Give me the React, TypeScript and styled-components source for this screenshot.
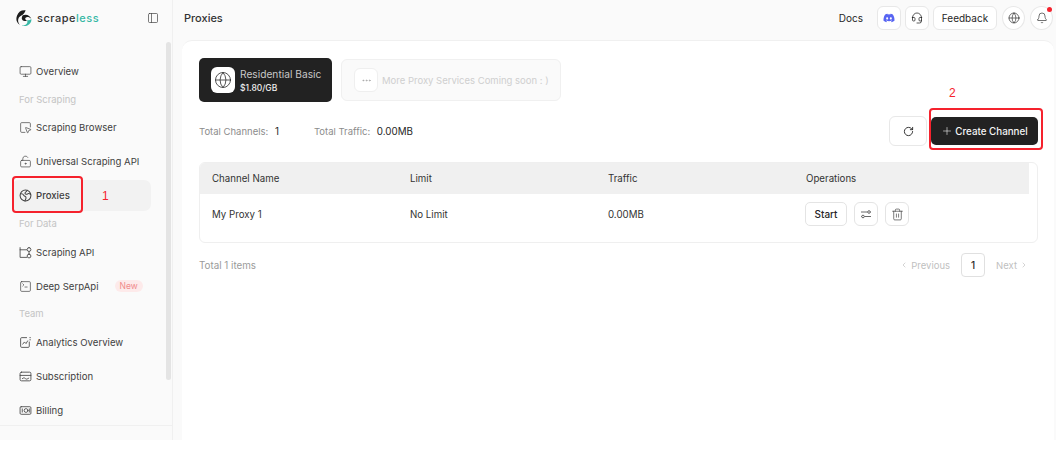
import styled, { createGlobalStyle } from "styled-components";
import {
  Bell,
  ChevronLeft,
  ChevronRight,
  Ellipsis,
  Globe,
  Headset,
  LockKeyholeOpen,
  Monitor,
  PanelLeft,
  Plus,
  RotateCw,
  SquareMousePointer,
  SquareTerminal,
  Trash2,
} from "lucide-react";
import { FaDiscord } from "react-icons/fa";

const GlobalStyle = createGlobalStyle`
  html, body {
    margin: 0;
    padding: 0;
    background: #fff;
    font-family: Inter, "Liberation Sans", sans-serif;
    color: #262626;
    overflow: hidden;
  }
  * { box-sizing: border-box; }
`;

type IconProps = { size?: number; strokeWidth?: number; color?: string };

function svgProps({ size = 13, strokeWidth = 1.3, color = "#444" }: IconProps) {
  return {
    width: size,
    height: size,
    viewBox: "0 0 24 24",
    fill: "none",
    stroke: color,
    strokeWidth: strokeWidth * 1.2,
    strokeLinecap: "round" as const,
    strokeLinejoin: "round" as const,
  };
}

function ProxyIcon(props: IconProps) {
  return (
    <svg {...svgProps(props)} strokeWidth={1.9}>
      <circle cx="12" cy="12" r="10" />
      <path d="M3 9c4-1 5 1 6 3s4 1 4 4-2 4-2 6" />
      <path d="M15 2.500c-1 3-4 3-4 5.500s4 2 5 1 3-1 5.500 1" />
    </svg>
  );
}

function ApiIcon(props: IconProps) {
  return (
    <svg {...svgProps(props)}>
      <path d="M2 3v18h12M2 7h12" />
      <rect x="15" y="3" width="7" height="7" rx="3.500" />
      <rect x="15" y="15" width="7" height="7" rx="3.500" />
      <path d="M18.500 10v5" />
    </svg>
  );
}

function AnalyticsIcon(props: IconProps) {
  return (
    <svg {...svgProps(props)}>
      <path d="M14 3H5a2 2 0 0 0-2 2v14a2 2 0 0 0 2 2h12a2 2 0 0 0 2-2v-8" />
      <path d="M7 15l3-4 3 3 3-5" />
      <path d="M20 3h1M20 7h1" />
    </svg>
  );
}

function SubscriptionIcon(props: IconProps) {
  return (
    <svg {...svgProps(props)}>
      <rect x="2" y="4" width="20" height="16" rx="2.500" />
      <path d="M2 10h20" />
      <path d="M6 16c2-2 4-2 6 0s4 0 6-1" />
    </svg>
  );
}

function BillingIcon(props: IconProps) {
  return (
    <svg {...svgProps(props)}>
      <rect x="2" y="5" width="20" height="14" rx="2" />
      <circle cx="13" cy="12" r="3.500" />
      <path d="M6 9v6M19 9v6" />
    </svg>
  );
}

const groups = [
  { items: [{ label: "Overview", Icon: Monitor }] },
  {
    title: "For Scraping",
    items: [
      { label: "Scraping Browser", Icon: SquareMousePointer },
      { label: "Universal Scraping API", Icon: LockKeyholeOpen },
      { label: "Proxies", Icon: ProxyIcon, active: true },
    ],
  },
  {
    title: "For Data",
    items: [
      { label: "Scraping API", Icon: ApiIcon },
      { label: "Deep SerpApi", Icon: SquareTerminal, badge: "New" },
    ],
  },
  {
    title: "Team",
    items: [
      { label: "Analytics Overview", Icon: AnalyticsIcon },
      { label: "Subscription", Icon: SubscriptionIcon },
      { label: "Billing", Icon: BillingIcon },
    ],
  },
];

function Logo() {
  return (
    <svg width="17" height="18" viewBox="0 0 24 24" fill="none">
      <path d="M15 1.200A11.500 11.500 0 0 0 7 22C3 17.500 3.500 11 9 8.500C11.500 7.300 14 5 15 1.200Z" fill="#1c1c1c" />
      <path d="M11 8C16 6 21.500 8 23 13.500C20.500 10.500 17 10 15 11.500C13.500 13 15 15 17 15C14 17.500 9.500 16 9.500 12.500C9.500 11 10 9.200 11 8Z" fill="#1c1c1c" />
      <path d="M23 13.500C24 19.500 17 25 9.500 22.800C14.500 22.800 19 20 17 15C19.500 15.500 21.500 15 23 13.500Z" fill="#37b8a5" />
    </svg>
  );
}

export default function App() {
  return (
    <>
      <GlobalStyle />
      <Page>
        <Sidebar>
          <Brand>
            <BrandName>
              <Logo />
              <BrandText>
                scrape<BrandAccent>less</BrandAccent>
              </BrandText>
            </BrandName>
            <PanelLeft size={12} strokeWidth={1.4} color="#444" />
          </Brand>
          <Nav>
            {groups.map((group, i) => (
              <div key={i}>
                {group.title && <GroupTitle>{group.title}</GroupTitle>}
                {group.items.map(({ label, Icon, active, badge }: any) => (
                  <NavSlot key={label}>
                    <NavItem $active={active}>
                      <Icon size={13} strokeWidth={1.3} color="#444" />
                      <span>{label}</span>
                      {badge && <Badge>{badge}</Badge>}
                    </NavItem>
                  </NavSlot>
                ))}
              </div>
            ))}
          </Nav>
          <SidebarFoot />
          <Scrollbar />
        </Sidebar>
        <Main>
          <TopBar>
            <PageTitle>Proxies</PageTitle>
            <TopActions>
              <DocsLink>Docs</DocsLink>
              <IconButton>
                <FaDiscord size={12} color="#5865f2" />
              </IconButton>
              <IconButton>
                <Headset size={12} strokeWidth={1.5} />
              </IconButton>
              <FeedbackButton>Feedback</FeedbackButton>
              <RoundButton>
                <Globe size={12} strokeWidth={1.3} />
              </RoundButton>
              <RoundButton>
                <Bell size={12} strokeWidth={1.3} />
                <RedDot />
              </RoundButton>
            </TopActions>
          </TopBar>
          <Panel>
            <Services>
              <ServiceCard>
                <ServiceIcon>
                  <Globe size={18} strokeWidth={1.1} color="#333" />
                </ServiceIcon>
                <div>
                  <ServiceName>Residential Basic</ServiceName>
                  <ServicePrice>$1.80/GB</ServicePrice>
                </div>
              </ServiceCard>
              <ComingCard>
                <ComingIcon>
                  <Ellipsis size={11} color="#aaa" />
                </ComingIcon>
                More Proxy Services Coming soon : )
              </ComingCard>
            </Services>
            <StatsRow>
              <Stats>
                <Stat>
                  Total Channels: <StatValue>1</StatValue>
                </Stat>
                <Stat>
                  Total Traffic: <StatValue>0.00MB</StatValue>
                </Stat>
              </Stats>
              <StatActions>
                <RefreshButton>
                  <RotateCw size={11} strokeWidth={2} />
                </RefreshButton>
                <CreateButton>
                  <Plus size={12} strokeWidth={1.2} />
                  Create Channel
                </CreateButton>
              </StatActions>
            </StatsRow>
            <TableCard>
              <HeaderRow>
                <Cell>Channel Name</Cell>
                <Cell>Limit</Cell>
                <Cell>Traffic</Cell>
                <Cell>Operations</Cell>
              </HeaderRow>
              <BodyRow>
                <Cell>My Proxy 1</Cell>
                <Cell>No Limit</Cell>
                <Cell>0.00MB</Cell>
                <OperationCell>
                  <StartButton>Start</StartButton>
                  <SmallIconButton>
                    <svg width="12" height="12" viewBox="0 0 24 24" fill="none" stroke="#444" strokeWidth="1.6">
                      <path d="M2 8h13M21 8h1M2 17h1M9 17h13" />
                      <circle cx="18" cy="8" r="2.6" />
                      <circle cx="6" cy="17" r="2.6" />
                    </svg>
                  </SmallIconButton>
                  <SmallIconButton>
                    <Trash2 size={13} strokeWidth={1.3} color="#444" />
                  </SmallIconButton>
                </OperationCell>
              </BodyRow>
            </TableCard>
            <Footer>
              <TotalItems>Total 1 items</TotalItems>
              <Pagination>
                <PageLink>
                  <ChevronLeft size={8} /> Previous
                </PageLink>
                <PageNumber>1</PageNumber>
                <PageLink>
                  Next <ChevronRight size={8} />
                </PageLink>
              </Pagination>
            </Footer>
          </Panel>
        </Main>
        <ProxiesMark />
        <CreateMark />
        <MarkNumber $x={102} $y={189}>1</MarkNumber>
        <MarkNumber $x={949} $y={86}>2</MarkNumber>
      </Page>
    </>
  );
}

const Page = styled.div`
  position: relative;
  display: flex;
  width: 1056px;
  height: 440px;
  background: #fafafa;
`;

const Sidebar = styled.aside`
  position: relative;
  width: 173px;
  flex: none;
  display: flex;
  flex-direction: column;
  border-right: 1px solid #f0f0f0;
`;

const Brand = styled.div`
  height: 36px;
  padding: 0 13px 0 15px;
  display: flex;
  align-items: center;
  justify-content: space-between;
`;

const BrandName = styled.div`
  display: flex;
  align-items: center;
  gap: 5px;
`;

const BrandText = styled.span`
  font-size: 11px;
  font-weight: 500;
  letter-spacing: 0.5px;
  color: #333;
`;

const BrandAccent = styled.span`
  color: #37b8a5;
`;

const Nav = styled.nav`
  flex: 1;
  padding-top: 18px;
  overflow: hidden;
`;

const GroupTitle = styled.div`
  height: 22.3px;
  padding-left: 19px;
  display: flex;
  align-items: center;
  font-size: 9.5px;
  color: #c4c4c4;
`;

const NavSlot = styled.div`
  height: 34px;
  padding: 2px 21px 1px 12px;
`;

const NavItem = styled.div<{ $active?: boolean }>`
  height: 31px;
  padding-left: 7px;
  display: flex;
  align-items: center;
  gap: 4px;
  font-size: 9.6px;
  border-radius: 7px;
  color: #404040;
  font-weight: ${(p) => (p.$active ? 500 : 400)};
  background: ${(p) => (p.$active ? "#f2f2f2" : "transparent")};
`;

const Badge = styled.span`
  margin-left: 12px;
  padding: 1px 5px;
  border-radius: 7px;
  font-size: 8.5px;
  color: #f08a8a;
  background: #fdeaea;
`;

const SidebarFoot = styled.div`
  height: 15px;
  flex: none;
  border-top: 1px solid #f0f0f0;
`;

const Scrollbar = styled.div`
  position: absolute;
  left: 166px;
  top: 42px;
  width: 5px;
  height: 338px;
  border-radius: 3px;
  background: #e4e4e4;
`;

const Main = styled.main`
  flex: 1;
  min-width: 0;
  display: flex;
  flex-direction: column;
`;

const TopBar = styled.header`
  height: 40px;
  flex: none;
  padding: 0 3px 4px 11px;
  display: flex;
  align-items: center;
  justify-content: space-between;
`;

const PageTitle = styled.div`
  font-size: 11px;
  font-weight: 500;
  color: #333;
`;

const TopActions = styled.div`
  display: flex;
  align-items: center;
  gap: 4px;
`;

const DocsLink = styled.span`
  margin-right: 10px;
  font-size: 10px;
  color: #262626;
`;

const IconButton = styled.button`
  width: 24px;
  height: 24px;
  padding: 0;
  display: flex;
  align-items: center;
  justify-content: center;
  background: #fff;
  border: 1px solid #e8e8e8;
  border-radius: 6px;
  color: #262626;
`;

const FeedbackButton = styled(IconButton)`
  width: 64px;
  font-family: inherit;
  font-size: 10px;
`;

const RoundButton = styled(IconButton)`
  position: relative;
  width: 23px;
  border-radius: 50%;
  margin-left: 1px;
`;

const RedDot = styled.span`
  position: absolute;
  top: 0;
  right: 0;
  width: 5px;
  height: 5px;
  border-radius: 50%;
  background: #f5222d;
`;

const Panel = styled.section`
  flex: 1;
  margin: 0 2px 0 9px;
  padding: 17px 16px 0 17px;
  background: #fff;
  border-radius: 10px 10px 0 0;
  border-top: 1px solid #f0f0f0;
`;

const Services = styled.div`
  display: flex;
  align-items: center;
  gap: 9px;
`;

const ServiceCard = styled.div`
  width: 133px;
  height: 44px;
  padding-left: 12px;
  display: flex;
  align-items: center;
  gap: 5px;
  border-radius: 5px;
  background: #222;
`;

const ServiceIcon = styled.div`
  width: 24px;
  height: 26px;
  display: flex;
  align-items: center;
  justify-content: center;
  border-radius: 6px;
  background: #fff;
`;

const ServiceName = styled.div`
  font-size: 10.2px;
  color: #c9c9c9;
  margin-bottom: 3px;
  white-space: nowrap;
`;

const ServicePrice = styled.div`
  font-size: 8.5px;
  font-weight: 500;
  color: #eee;
`;

const ComingCard = styled.div`
  width: 220px;
  height: 42px;
  padding-left: 12px;
  display: flex;
  align-items: center;
  gap: 4px;
  border: 1px solid #f0f0f0;
  border-radius: 6px;
  background: #fafafa;
  font-size: 9.5px;
  color: #cfcfcf;
  white-space: nowrap;
`;

const ComingIcon = styled.div`
  width: 24px;
  height: 24px;
  display: flex;
  align-items: center;
  justify-content: center;
  border: 1px solid #efefef;
  border-radius: 6px;
  background: #fff;
`;

const StatsRow = styled.div`
  margin-top: 14px;
  height: 30px;
  display: flex;
  align-items: center;
  justify-content: space-between;
`;

const Stats = styled.div`
  display: flex;
  gap: 35px;
`;

const Stat = styled.span`
  font-size: 9.5px;
  color: #8c8c8c;
`;

const StatValue = styled.span`
  margin-left: 4px;
  font-size: 9.8px;
  color: #262626;
`;

const StatActions = styled.div`
  display: flex;
  align-items: center;
  gap: 4px;
`;

const RefreshButton = styled.button`
  width: 38px;
  height: 30px;
  padding: 0;
  display: flex;
  align-items: center;
  justify-content: center;
  background: #fff;
  border: 1px solid #e8e8e8;
  border-radius: 6px;
  color: #262626;
`;

const CreateButton = styled.button`
  width: 107px;
  height: 28px;
  padding: 0;
  display: flex;
  align-items: center;
  justify-content: center;
  gap: 2px;
  border: none;
  border-radius: 5px;
  background: #222;
  color: #f5f5f5;
  font-family: inherit;
  font-size: 9.8px;
  font-weight: 500;
`;

const TableCard = styled.div`
  margin-top: 16px;
  height: 81px;
  border: 1px solid #efefef;
  border-radius: 6px;
  overflow: hidden;
`;

const Row = styled.div`
  display: grid;
  grid-template-columns: 198px 198px 198px 1fr;
  align-items: center;
  font-size: 9.7px;
  color: #333;
`;

const HeaderRow = styled(Row)`
  width: 829px;
  height: 31px;
  background: #f0f0f0;
`;

const BodyRow = styled(Row)`
  height: 40px;
`;

const Cell = styled.div`
  padding-left: 12px;
`;

const OperationCell = styled(Cell)`
  display: flex;
  align-items: center;
  gap: 7px;
  padding-left: 11px;
`;

const StartButton = styled.button`
  width: 42px;
  height: 24px;
  padding: 0;
  border: 1px solid #e4e4e4;
  border-radius: 5px;
  background: #fff;
  color: #262626;
  font-family: inherit;
  font-size: 10px;
  font-weight: 500;
`;

const SmallIconButton = styled(IconButton)`
  border-color: #e4e4e4;
`;

const Footer = styled.div`
  margin-top: 10px;
  display: flex;
  align-items: center;
  justify-content: space-between;
`;

const TotalItems = styled.span`
  font-size: 9.8px;
  color: #9a9a9a;
`;

const Pagination = styled.div`
  display: flex;
  align-items: center;
  gap: 11px;
  padding-right: 10px;
`;

const PageLink = styled.span`
  display: flex;
  align-items: center;
  gap: 3px;
  font-size: 9.5px;
  color: #bfbfbf;
`;

const PageNumber = styled.span`
  width: 24px;
  height: 24px;
  display: flex;
  align-items: center;
  justify-content: center;
  border: 1px solid #e0e0e0;
  border-radius: 4px;
  font-size: 10px;
  font-weight: 500;
  color: #262626;
`;

const Annotation = styled.div`
  position: absolute;
  border: 2px solid #f5222d;
  border-radius: 4px;
`;

const ProxiesMark = styled(Annotation)`
  left: 12px;
  top: 176px;
  width: 71px;
  height: 37px;
`;

const CreateMark = styled(Annotation)`
  left: 929px;
  top: 108px;
  width: 114px;
  height: 42px;
`;

const MarkNumber = styled.span<{ $x: number; $y: number }>`
  position: absolute;
  left: ${(p) => p.$x}px;
  top: ${(p) => p.$y}px;
  font-family: "Liberation Sans", sans-serif;
  font-size: 12px;
  color: #f5222d;
`;
